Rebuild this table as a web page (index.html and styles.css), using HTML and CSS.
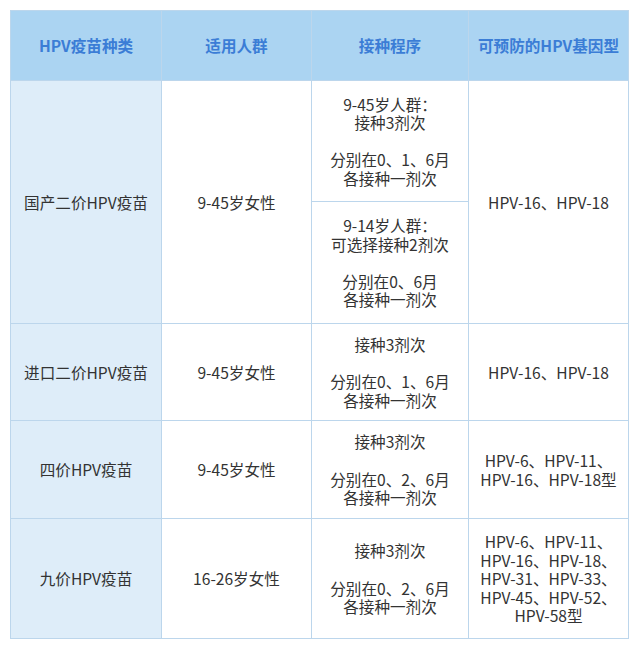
FILE: index.html
```html
<!DOCTYPE html>
<html lang="zh-CN">
<head>
<meta charset="utf-8">
<title>HPV疫苗</title>
<link rel="stylesheet" href="styles.css">
</head>
<body>
<table class="hpv">
  <colgroup>
    <col class="c1"><col class="c2"><col class="c3"><col class="c4">
  </colgroup>
  <thead>
    <tr class="head">
      <th>HPV疫苗种类</th>
      <th>适用人群</th>
      <th>接种程序</th>
      <th>可预防的HPV基因型</th>
    </tr>
  </thead>
  <tbody>
    <tr class="sub-a">
      <td class="name" rowspan="2">国产二价HPV疫苗</td>
      <td rowspan="2">9-45岁女性</td>
      <td>9-45岁人群：<br>接种3剂次<br><br>分别在0、1、6月<br>各接种一剂次</td>
      <td rowspan="2">HPV-16、HPV-18</td>
    </tr>
    <tr class="sub-b">
      <td>9-14岁人群：<br>可选择接种2剂次<br><br>分别在0、6月<br>各接种一剂次</td>
    </tr>
    <tr class="r2">
      <td class="name">进口二价HPV疫苗</td>
      <td>9-45岁女性</td>
      <td>接种3剂次<br><br>分别在0、1、6月<br>各接种一剂次</td>
      <td>HPV-16、HPV-18</td>
    </tr>
    <tr class="r3">
      <td class="name">四价HPV疫苗</td>
      <td>9-45岁女性</td>
      <td>接种3剂次<br><br>分别在0、2、6月<br>各接种一剂次</td>
      <td>HPV-6、HPV-11、<br>HPV-16、HPV-18型</td>
    </tr>
    <tr class="r4">
      <td class="name">九价HPV疫苗</td>
      <td>16-26岁女性</td>
      <td>接种3剂次<br><br>分别在0、2、6月<br>各接种一剂次</td>
      <td>HPV-6、HPV-11、<br>HPV-16、HPV-18、<br>HPV-31、HPV-33、<br>HPV-45、HPV-52、<br>HPV-58型</td>
    </tr>
  </tbody>
</table>
</body>
</html>
```
FILE: styles.css
```css
html, body {
  margin: 0;
  padding: 0;
  background: #ffffff;
}
body {
  padding: 10px 0 0 10px;
  font-family: "Noto Sans CJK SC", "Noto Sans", sans-serif;
}
.hpv {
  border-collapse: collapse;
  table-layout: fixed;
  width: 618px;
  font-size: 15.6px;
  line-height: 18.6px;
  color: #333333;
}
.c1 { width: 151px; }
.c2 { width: 150px; }
.c3 { width: 157px; }
.c4 { width: 160px; }
.hpv th,
.hpv td {
  border: 1px solid #bcd6ec;
  text-align: center;
  vertical-align: middle;
  padding: 0 2px;
}
.hpv th {
  background: #abd4f2;
  color: #3b7dd6;
  font-weight: bold;
  font-size: 15.6px;
}
.head { height: 70px; }
.sub-a { height: 121px; }
.sub-b { height: 122px; }
.r2 { height: 97px; }
.r3 { height: 98px; }
.r4 { height: 120px; }
.hpv td.name {
  background: #deedf9;
}
```
